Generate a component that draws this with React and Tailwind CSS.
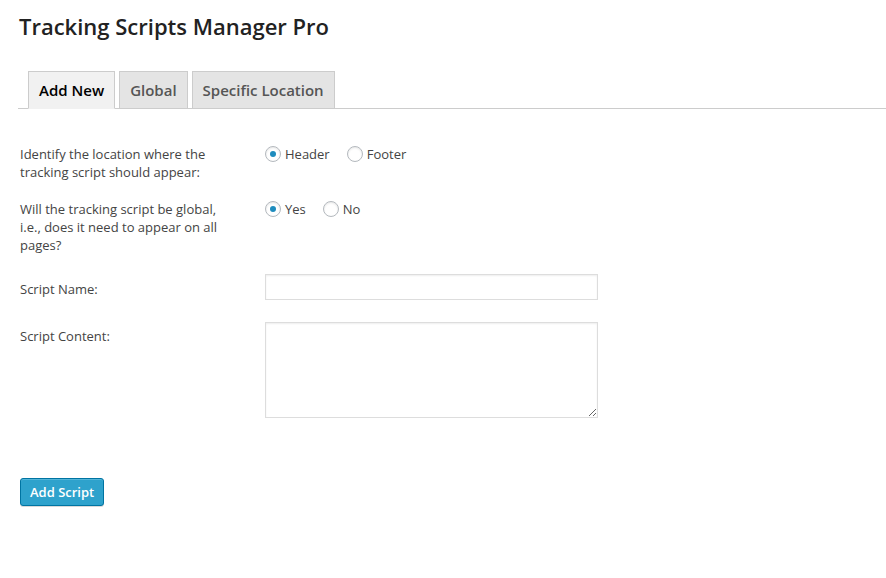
import React from 'react';

const Radio = ({ checked, label }) => (
    <label className="flex items-center gap-[4px] mr-[17px]">
        <span className="w-[16px] h-[16px] rounded-full border border-[#b4b9be] bg-white shadow-[inset_0_1px_2px_rgba(0,0,0,0.1)] flex items-center justify-center">
            {checked && <span className="w-[6px] h-[6px] rounded-full bg-[#1e8cbe]" />}
        </span>
        <span>{label}</span>
    </label>
);

const App = () => {
    return (
        <div className="bg-white min-h-[578px] w-[886px] text-[13px] leading-[18px] text-[#444]" style={{ fontFamily: '"Open Sans", "Liberation Sans", sans-serif' }}>
            <div className="pl-[18px] pt-[12px]">
                <h2 className="text-[22px] leading-[29px] font-semibold text-[#222] pl-[1px]">Tracking Scripts Manager Pro</h2>

                <div className="mt-[30px] flex items-end gap-[4px] pl-[10px] border-b border-[#ccc]">
                    <div className="px-[10px] h-[38px] -mb-px flex items-center text-[15px] font-semibold text-black bg-[#f1f1f1] border border-[#ccc] border-b-[#f1f1f1]">Add New</div>
                    <div className="px-[10px] h-[37px] flex items-center text-[15px] font-semibold text-[#555] bg-[#e4e4e4] border border-[#ccc] border-b-0">Global</div>
                    <div className="px-[10px] h-[37px] flex items-center text-[15px] font-semibold text-[#555] bg-[#e4e4e4] border border-[#ccc] border-b-0">Specific Location</div>
                </div>

                <div className="pl-[2px] pt-[36px] flex flex-col gap-[20px]">
                    <div className="grid grid-cols-[245px_1fr] items-start">
                        <div className="w-[200px]">Identify the location where the tracking script should appear:</div>
                        <div className="flex">
                            <Radio checked label="Header" />
                            <Radio label="Footer" />
                        </div>
                    </div>
                    <div className="grid grid-cols-[245px_1fr] items-start -mt-px">
                        <div className="w-[205px]">Will the tracking script be global, i.e., does it need to appear on all pages?</div>
                        <div className="flex">
                            <Radio checked label="Yes" />
                            <Radio label="No" />
                        </div>
                    </div>
                    <div className="grid grid-cols-[245px_1fr] items-start">
                        <div className="pt-[6px]">Script Name:</div>
                        <input type="text" className="w-[333px] h-[26px] border border-[#ddd] shadow-[inset_0_1px_2px_rgba(0,0,0,0.07)] bg-white outline-none" />
                    </div>
                    <div className="grid grid-cols-[245px_1fr] items-start mt-[2px]">
                        <div className="pt-[5px]">Script Content:</div>
                        <textarea className="w-[333px] h-[96px] border border-[#ddd] shadow-[inset_0_1px_2px_rgba(0,0,0,0.07)] bg-white outline-none block" />
                    </div>
                </div>

                <div className="pl-[2px] mt-[60px]">
                    <button className="h-[28px] px-[9px] text-[13px] font-semibold text-white bg-[#2ea2cc] border border-[#0074a2] rounded-[3px] shadow-[inset_0_1px_0_rgba(120,200,230,0.5),0_1px_0_rgba(0,0,0,0.15)]">Add Script</button>
                </div>
            </div>
        </div>
    );
};

export default App;
